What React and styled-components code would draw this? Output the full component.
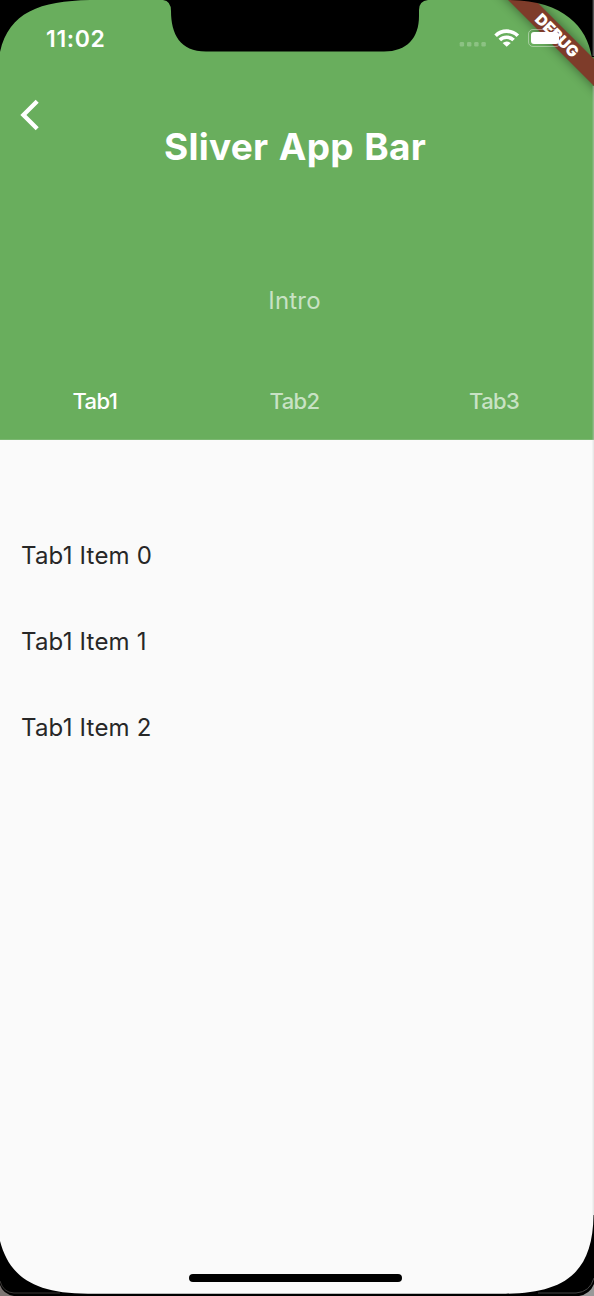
import React from "react";
import styled, { createGlobalStyle } from "styled-components";

const Global = createGlobalStyle`
  * { box-sizing: border-box; }
  body { margin: 0; background: #000; font-family: Inter, "Liberation Sans", sans-serif; }
`;

const Screen = styled.main`
  position: relative;
  width: 594px;
  height: 1296px;
  overflow: hidden;
  display: flex;
  flex-direction: column;
  background: #fafafa;
`;

const Header = styled.header`
  height: 440px;
  flex: none;
  display: flex;
  flex-direction: column;
  background: #69ae5d;
  border-bottom: 1px solid #7cb872;
  color: #fff;
`;

const StatusBar = styled.div`
  height: 76px;
  padding: 0 0 0 46px;
  display: flex;
  align-items: center;
  justify-content: space-between;
`;

const Time = styled.time`
  padding-top: 1px;
  font-size: 23px;
  line-height: 28px;
  font-weight: 580;
  letter-spacing: 0.65px;
`;

const StatusIcons = styled.svg`
  width: 140px;
  height: 76px;
  flex: none;
`;

const TitleBar = styled.div`
  height: 145px;
  display: grid;
  grid-template-columns: 60px 1fr 64px;
`;

const BackButton = styled.button`
  height: 78px;
  padding: 0;
  border: 0;
  background: none;
  color: inherit;
  svg { display: block; }
`;

const Title = styled.h1`
  margin: 49px 0 0;
  font-size: 37px;
  line-height: 44px;
  font-weight: 670;
  letter-spacing: 0.25px;
  word-spacing: 1.4px;
  text-align: center;
  white-space: nowrap;
`;

const Intro = styled.p`
  margin: 0 5px 0 0;
  flex: 1;
  padding-top: 65px;
  font-size: 24px;
  line-height: 30px;
  letter-spacing: 0.2px;
  text-align: center;
  color: #c8e2c4;
`;

const Tabs = styled.nav`
  height: 76px;
  margin: 0 0 0 -5px;
  display: grid;
  grid-template-columns: repeat(3, 1fr);
`;

const Tab = styled.button`
  padding: 0;
  border: 0;
  background: none;
  font: 500 22px/28px Inter, "Liberation Sans", sans-serif;
  letter-spacing: -0.6px;
  color: ${(p) => (p.$active ? "#fff" : "#c8e2c4")};
`;

const List = styled.ul`
  margin: 0;
  padding: 72px 0 0 21px;
  list-style: none;
`;

const Item = styled.li`
  height: 86px;
  display: flex;
  align-items: center;
  font-size: 24px;
  letter-spacing: 0.2px;
  color: #272727;
`;

const Frame = styled.svg`
  position: absolute;
  inset: 0;
  pointer-events: none;
`;

const Ribbon = styled.div`
  position: absolute;
  left: 457px;
  top: 26px;
  width: 200px;
  height: 19px;
  transform: rotate(45deg);
  background: #7e3c2a;
  box-shadow: 0 0 11px rgba(0, 0, 0, 0.45);
  color: #fff;
  font-size: 15.5px;
  line-height: 19px;
  font-weight: 900;
  text-align: center;
`;

const Battery = styled.div`
  position: absolute;
  left: 528px;
  top: 29px;
  width: 33px;
  height: 18px;
  padding: 2px;
  border: 1px solid rgba(255, 255, 255, 0.4);
  border-radius: 5px;
  &::before {
    content: "";
    display: block;
    width: 28px;
    height: 12px;
    border-radius: 3px;
    background: #fff;
  }
`;

const tabs = ["Tab1", "Tab2", "Tab3"];
const items = ["Tab1 Item 0", "Tab1 Item 1", "Tab1 Item 2"];

export default function App() {
  return (
    <>
      <Global />
      <Screen>
        <Header>
          <StatusBar>
            <Time>11:02</Time>
            <StatusIcons viewBox="454 0 140 76">
              <g fill="#8cc283">
                {[459.7, 467, 474.2, 481.4].map((x) => (
                  <rect key={x} x={x} y="42" width="4.4" height="4.4" rx="1.2" />
                ))}
              </g>
              <g fill="none" stroke="#fff" strokeWidth="3.7">
                <path d="M495.6 35.7a15.9 15.9 0 0 1 22.2 0" />
                <path d="M499.8 40a10 10 0 0 1 13.8 0" />
              </g>
              <path fill="#fff" d="M502.6 43q4.1-3 8.2 0l-4.1 3.7z" />
            </StatusIcons>
          </StatusBar>
          <TitleBar>
            <BackButton aria-label="Back">
              <svg width="60" height="78" viewBox="0 76 60 78" fill="none" stroke="#fff" strokeWidth="4.3">
                <path d="M37.2 101.2L23.4 115l13.8 13.8" />
              </svg>
            </BackButton>
            <Title>Sliver App Bar</Title>
          </TitleBar>
          <Intro>Intro</Intro>
          <Tabs>
            {tabs.map((t, i) => (
              <Tab key={t} $active={i === 0}>{t}</Tab>
            ))}
          </Tabs>
        </Header>
        <List>
          {items.map((t) => (
            <Item key={t}>{t}</Item>
          ))}
        </List>
        <Ribbon>DEBUG</Ribbon>
        <Battery />
        <Frame width="594" height="1296" viewBox="0 0 594 1296">
          <path d="M163 0Q171 1 171 11C171 34 180 51.5 206 51.5H384C407 51.5 419 38 419 16V10Q419 1 428 0Z" />
          <path d="M0 0H90C40 1 9 12 0 52Z" />
          <path d="M510 0H594V57H591.8C587 27 564 1 510 0Z" />
          <path d="M0 1241C9 1275 32 1293.7 88 1293.7H506C562 1293 593 1275 593.5 1215H594V1296H0Z" />
          <path d="M0 1281Q3 1292.5 14 1293H60" fill="none" stroke="#3a3735" />
          <path d="M594 1278Q590 1292 576 1293H538" fill="none" stroke="#444" />
          <path d="M0 1285Q3 1294 14 1296H0Z" fill="#7d7673" />
          <path d="M594 1284Q590 1294 579 1296H594Z" fill="#999" />
          <path d="M593.3 86V1215" stroke="#ccc" strokeOpacity=".4" strokeWidth="1.4" />
          <path d="M593.3 0V56" stroke="#555" strokeWidth="1.4" />
          <rect x="189" y="1274" width="213" height="8" rx="4" />
        </Frame>
      </Screen>
    </>
  );
}
